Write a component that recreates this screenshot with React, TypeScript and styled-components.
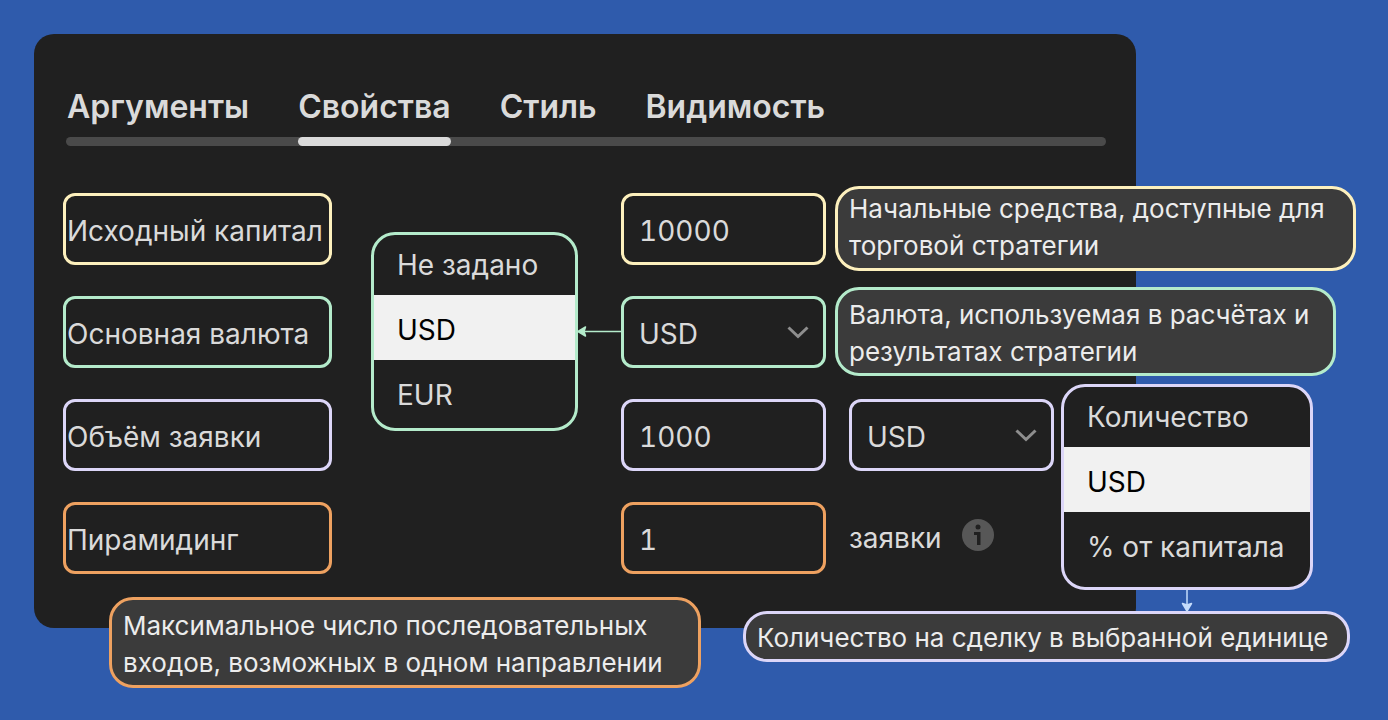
import React from 'react';
import styled, { createGlobalStyle } from 'styled-components';

const colors = {
  page: '#2f5bac',
  panel: '#202020',
  text: '#dadada',
  track: '#4a4a4a',
  callout: '#3b3b3b',
  yellow: '#fdf0bd',
  green: '#b4ebcb',
  violet: '#dcd6f8',
  orange: '#eea160',
};

type Tone = 'yellow' | 'green' | 'violet' | 'orange';

const GlobalStyle = createGlobalStyle`
  *, *::before, *::after { box-sizing: border-box; }
  body {
    margin: 0;
    background: ${colors.page};
    color: ${colors.text};
    font-family: Inter, "Liberation Sans", sans-serif;
    font-size: 28px;
    line-height: 36px;
  }
  button, input, select { font: inherit; color: inherit; }
`;

const Page = styled.main`
  min-height: 100vh;
  padding: 34px 252px 92px 34px;
`;

const Panel = styled.section`
  min-width: 1102px;
  padding: 53px 30px 54px 32px;
  border-radius: 20px;
  background: ${colors.panel};
`;

const TabList = styled.div`
  display: flex;
  gap: 49px;
  padding-left: 1px;
`;

const Tab = styled.button<{ $active?: boolean }>`
  position: relative;
  padding: 0;
  border: 0;
  background: none;
  font-size: 32px;
  font-weight: 600;
  line-height: 40px;
  white-space: nowrap;
  cursor: pointer;

  &::after {
    content: '';
    display: ${(p) => (p.$active ? 'block' : 'none')};
    position: absolute;
    inset: 50px 0 auto;
    height: 9px;
    border-radius: 5px;
    background: ${colors.text};
  }
`;

const Track = styled.div`
  height: 9px;
  margin-top: 10px;
  border-radius: 5px;
  background: ${colors.track};
`;

const Fields = styled.form`
  display: flex;
  flex-direction: column;
  gap: 31px;
  margin: 47px 0 0 -3px;
`;

const Row = styled.div`
  position: relative;
  display: flex;
  align-items: center;
  height: 72px;
`;

const FieldLabel = styled.label<{ $tone: Tone }>`
  display: flex;
  align-items: center;
  flex: none;
  width: 269px;
  height: 72px;
  margin-right: 289px;
  padding: 4px 0 0 1px;
  border: 3px solid ${(p) => colors[p.$tone]};
  border-radius: 12px;
  white-space: nowrap;
`;

const TextInput = styled.input<{ $tone: Tone }>`
  width: 205px;
  height: 72px;
  padding: 4px 14px 0 15px;
  border: 3px solid ${(p) => colors[p.$tone]};
  border-radius: 12px;
  outline: 0;
  background: transparent;
  font-variant-numeric: tabular-nums;
`;

const SelectBox = styled.div`
  position: relative;
  width: 205px;
  height: 72px;

  input + & { margin-left: 23px; }
`;

const NativeSelect = styled.select<{ $tone: Tone }>`
  width: 100%;
  height: 100%;
  padding: 4px 40px 0 15px;
  appearance: none;
  border: 3px solid ${(p) => colors[p.$tone]};
  border-radius: 12px;
  outline: 0;
  background: ${colors.panel};
`;

const Chevron = styled.svg`
  position: absolute;
  top: 30px;
  right: 17px;
  width: 22px;
  height: 13px;
  pointer-events: none;
`;

const Unit = styled.span`
  margin: 0 20px 0 23px;
`;

const InfoButton = styled.button`
  width: 32px;
  height: 32px;
  margin-bottom: 6px;
  padding: 0;
  border: 0;
  background: none;
  cursor: pointer;

  svg { display: block; }
`;

const Menu = styled.ul<{ $tone: Tone; $left: number; $top: number; $width: number; $height: number }>`
  position: absolute;
  z-index: 2;
  left: ${(p) => p.$left}px;
  top: ${(p) => p.$top}px;
  width: ${(p) => p.$width}px;
  height: ${(p) => p.$height}px;
  margin: 0;
  padding: 0;
  overflow: hidden;
  list-style: none;
  border: 3px solid ${(p) => colors[p.$tone]};
  border-radius: 24px;
  background: ${colors.panel};
`;

const Option = styled.li`
  display: flex;
  align-items: center;
  height: 65px;
  padding: 4px 0 0 23px;
  white-space: nowrap;

  &:first-child { height: 60px; padding-top: 0; }
  &[aria-selected='true'] { background: #f1f1f1; color: #000; }
`;

const Callout = styled.p<{ $tone: Tone; $left: number; $top: number; $width: number; $height: number; $pad: number }>`
  position: absolute;
  z-index: 1;
  left: ${(p) => p.$left}px;
  top: ${(p) => p.$top}px;
  width: ${(p) => p.$width}px;
  height: ${(p) => p.$height}px;
  margin: 0;
  padding: ${(p) => p.$pad}px 0 0 11px;
  border: 3px solid ${(p) => colors[p.$tone]};
  border-radius: 24px;
  background: ${colors.callout};
  color: #ececec;
  font-size: 26px;
  line-height: 37px;
  white-space: nowrap;
`;

const Arrow = styled.svg<{ $left: number; $top: number }>`
  position: absolute;
  z-index: 3;
  left: ${(p) => p.$left}px;
  top: ${(p) => p.$top}px;
  pointer-events: none;
`;

function Dropdown({ id, label, tone }: { id: string; label?: string; tone: Tone }) {
  return (
    <SelectBox>
      <NativeSelect id={id} $tone={tone} aria-label={label} defaultValue="USD">
        <option>USD</option>
      </NativeSelect>
      <Chevron viewBox="0 0 22 13" fill="none" stroke="#8e8e8e" strokeWidth="3" aria-hidden="true">
        <path d="M1.5 1.5 11 10.5 20.5 1.5" />
      </Chevron>
    </SelectBox>
  );
}

export default function App() {
  return (
    <>
      <GlobalStyle />
      <Page>
        <Panel>
          <TabList role="tablist">
            <Tab role="tab" aria-selected={false}>Аргументы</Tab>
            <Tab role="tab" aria-selected $active>Свойства</Tab>
            <Tab role="tab" aria-selected={false}>Стиль</Tab>
            <Tab role="tab" aria-selected={false}>Видимость</Tab>
          </TabList>
          <Track />

          <Fields>
            <Row>
              <FieldLabel htmlFor="capital" $tone="yellow">Исходный капитал</FieldLabel>
              <TextInput id="capital" $tone="yellow" defaultValue="10000" />
              <Callout $tone="yellow" $left={772} $top={-7} $width={521} $height={85} $pad={1}>
                Начальные средства, доступные для
                <br />
                торговой стратегии
              </Callout>
            </Row>

            <Row>
              <FieldLabel htmlFor="currency" $tone="green">Основная валюта</FieldLabel>
              <Dropdown id="currency" tone="green" />
              <Menu role="listbox" aria-label="Основная валюта" $tone="green" $left={308} $top={-64} $width={207} $height={199}>
                <Option role="option" aria-selected={false}>Не задано</Option>
                <Option role="option" aria-selected>USD</Option>
                <Option role="option" aria-selected={false}>EUR</Option>
              </Menu>
              <Arrow $left={513} $top={29} width="46" height="13" viewBox="0 0 46 13" aria-hidden="true">
                <path d="M8 6.5H46" stroke={colors.green} strokeWidth="1.5" />
                <path d="M2 6.5 9.5 2 8 6.5 9.5 11Z" fill={colors.green} stroke={colors.green} strokeWidth="1.5" strokeLinejoin="round" />
              </Arrow>
              <Callout $tone="green" $left={772} $top={-9} $width={501} $height={89} $pad={6}>
                Валюта, используемая в расчётах и
                <br />
                результатах стратегии
              </Callout>
            </Row>

            <Row>
              <FieldLabel htmlFor="size" $tone="violet">Объём заявки</FieldLabel>
              <TextInput id="size" $tone="violet" defaultValue="1000" />
              <Dropdown id="size-unit" label="Количество" tone="violet" />
              <Menu role="listbox" aria-label="Объём заявки" $tone="violet" $left={998} $top={-15} $width={252} $height={206}>
                <Option role="option" aria-selected={false}>Количество</Option>
                <Option role="option" aria-selected>USD</Option>
                <Option role="option" aria-selected={false}>% от капитала</Option>
              </Menu>
              <Callout $tone="violet" $left={680} $top={212} $width={607} $height={51} $pad={5}>
                Количество на сделку в выбранной единице
              </Callout>
              <Arrow $left={1118} $top={191} width="12" height="23" viewBox="0 0 12 23" aria-hidden="true">
                <path d="M6 0V16" stroke="#c5dcfb" strokeWidth="1.5" />
                <path d="M6 21 1.5 13.5 6 15 10.5 13.5Z" fill="#c5dcfb" stroke="#c5dcfb" strokeWidth="1.5" strokeLinejoin="round" />
              </Arrow>
            </Row>

            <Row>
              <FieldLabel htmlFor="pyramiding" $tone="orange">Пирамидинг</FieldLabel>
              <TextInput id="pyramiding" $tone="orange" defaultValue="1" />
              <Unit>заявки</Unit>
              <InfoButton type="button" aria-label="Пирамидинг">
                <svg width="32" height="32" viewBox="0 0 32 32" aria-hidden="true">
                  <circle cx="16" cy="16" r="16" fill="#575757" />
                  <circle cx="16" cy="8" r="2.5" fill={colors.panel} />
                  <path d="M12 13H18.5V26H15V16H12Z" fill={colors.panel} />
                </svg>
              </InfoButton>
              <Callout $tone="orange" $left={46} $top={95} $width={592} $height={91} $pad={7}>
                Максимальное число последовательных
                <br />
                входов, возможных в одном направлении
              </Callout>
            </Row>
          </Fields>
        </Panel>
      </Page>
    </>
  );
}
